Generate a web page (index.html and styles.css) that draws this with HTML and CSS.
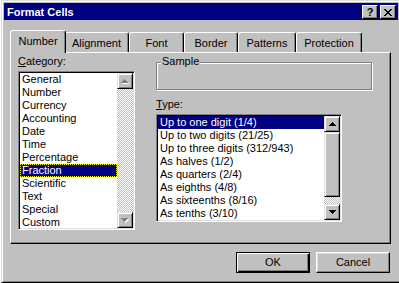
FILE: index.html
```html
<!DOCTYPE html>
<html lang="en">

<head>
    <meta charset="UTF-8">
    <meta name="viewport" content="width=device-width, initial-scale=1.0">
    <title>Format Cells</title>
    <link rel="stylesheet" href="styles.css">
</head>

<body>
    <div class="dialog">
        <div class="titlebar">
            <span class="title">Format Cells</span>
            <div class="caption-btns">
                <span class="cap-btn">?</span>
                <span class="cap-btn">
                    <svg width="8" height="7" viewBox="0 0 8 7" shape-rendering="crispEdges">
                        <path d="M0 0h2v1h-2zM6 0h2v1h-2zM1 1h2v1h-2zM5 1h2v1h-2zM2 2h4v1h-4zM3 3h2v1h-2zM2 4h4v1h-4zM1 5h2v1h-2zM5 5h2v1h-2zM0 6h2v1h-2zM6 6h2v1h-2z" fill="#000"/>
                    </svg>
                </span>
            </div>
        </div>

        <div class="client">
            <div class="tabs">
                <div class="tab is-active" style="width: 56px">Number</div>
                <div class="tab" style="width: 65px">Alignment</div>
                <div class="tab" style="width: 55px">Font</div>
                <div class="tab" style="width: 54px">Border</div>
                <div class="tab" style="width: 58px">Patterns</div>
                <div class="tab" style="width: 66px">Protection</div>
            </div>

            <div class="panel">
                <div class="col-left">
                    <div class="field-label"><u>C</u>ategory:</div>
                    <div class="listbox listbox-category">
                        <ul class="list-items">
                            <li>General</li>
                            <li>Number</li>
                            <li>Currency</li>
                            <li>Accounting</li>
                            <li>Date</li>
                            <li>Time</li>
                            <li>Percentage</li>
                            <li class="is-selected has-focus">Fraction</li>
                            <li>Scientific</li>
                            <li>Text</li>
                            <li>Special</li>
                            <li>Custom</li>
                        </ul>
                        <div class="scrollbar">
                            <div class="sb-btn is-disabled">
                                <svg width="8" height="5" viewBox="0 0 8 5" shape-rendering="crispEdges">
                                    <path d="M4 1h1v1h-1zM3 2h3v1h-3zM2 3h5v1h-5zM1 4h7v1h-7z" fill="#fff"/>
                                    <path d="M3 0h1v1h-1zM2 1h3v1h-3zM1 2h5v1h-5zM0 3h7v1h-7z" fill="#808080"/>
                                </svg>
                            </div>
                            <div class="sb-track"></div>
                            <div class="sb-btn is-disabled">
                                <svg width="8" height="5" viewBox="0 0 8 5" shape-rendering="crispEdges">
                                    <path d="M1 1h7v1h-7zM2 2h5v1h-5zM3 3h3v1h-3zM4 4h1v1h-1z" fill="#fff"/>
                                    <path d="M0 0h7v1h-7zM1 1h5v1h-5zM2 2h3v1h-3zM3 3h1v1h-1z" fill="#808080"/>
                                </svg>
                            </div>
                        </div>
                    </div>
                </div>

                <div class="col-right">
                    <div class="sample">
                        <span class="sample-legend">Sample</span>
                    </div>
                    <div class="field-label field-label-type"><u>T</u>ype:</div>
                    <div class="listbox listbox-type">
                        <ul class="list-items">
                            <li class="is-selected">Up to one digit (1/4)</li>
                            <li>Up to two digits (21/25)</li>
                            <li>Up to three digits (312/943)</li>
                            <li>As halves (1/2)</li>
                            <li>As quarters (2/4)</li>
                            <li>As eighths (4/8)</li>
                            <li>As sixteenths (8/16)</li>
                            <li>As tenths (3/10)</li>
                        </ul>
                        <div class="scrollbar">
                            <div class="sb-btn">
                                <svg width="7" height="4" viewBox="0 0 7 4" shape-rendering="crispEdges">
                                    <path d="M3 0h1v1h-1zM2 1h3v1h-3zM1 2h5v1h-5zM0 3h7v1h-7z" fill="#000"/>
                                </svg>
                            </div>
                            <div class="sb-thumb"></div>
                            <div class="sb-track"></div>
                            <div class="sb-btn">
                                <svg width="7" height="4" viewBox="0 0 7 4" shape-rendering="crispEdges">
                                    <path d="M0 0h7v1h-7zM1 1h5v1h-5zM2 2h3v1h-3zM3 3h1v1h-1z" fill="#000"/>
                                </svg>
                            </div>
                        </div>
                    </div>
                </div>
            </div>

            <div class="actions">
                <button class="btn btn-default">OK</button>
                <button class="btn">Cancel</button>
            </div>
        </div>
    </div>
</body>

</html>
```

FILE: styles.css
```css
html,
body {
    margin: 0;
}

body {
    width: 399px;
    height: 283px;
    overflow: hidden;
    background: #fff;
    color: #000;
    font-family: "Liberation Sans", Arial, sans-serif;
    font-size: 11px;
    line-height: 13px;
}

.dialog {
    box-sizing: border-box;
    width: 400px;
    height: 283px;
    margin-left: 1px;
    padding: 2px;
    background: #c0c0c0;
    border: 1px solid;
    border-color: #dfdfdf #000 #000 #dfdfdf;
    box-shadow: inset 1px 1px #fff, inset -1px -1px #808080;
}

.titlebar {
    height: 17px;
    padding: 0 2px 0 3px;
    display: flex;
    justify-content: space-between;
    align-items: flex-start;
    background: #000080;
    color: #fff;
}

.title {
    font-weight: bold;
    line-height: 18px;
}

.caption-btns {
    display: flex;
    gap: 2px;
    margin-top: 2px;
}

.cap-btn {
    box-sizing: border-box;
    width: 16px;
    height: 14px;
    display: flex;
    align-items: center;
    justify-content: center;
    background: #c0c0c0;
    color: #000;
    font-weight: bold;
    font-size: 11px;
    border: 1px solid;
    border-color: #fff #000 #000 #fff;
    box-shadow: inset -1px -1px #808080;
}

.client {
    padding: 10px 0 0 6px;
}

/* tabs */

.tabs {
    height: 22px;
    padding-left: 2px;
    display: flex;
    align-items: flex-end;
    position: relative;
    z-index: 1;
}

.tab {
    box-sizing: border-box;
    height: 20px;
    padding-top: 4px;
    text-align: center;
    white-space: nowrap;
    background: #c0c0c0;
    border: 1px solid;
    border-bottom: 0;
    border-color: #fff #000 transparent #fff;
    border-radius: 3px 3px 0 0;
    box-shadow: inset -1px 0 #808080;
}

.tab.is-active {
    height: 23px;
    margin: 0 -2px -1px;
    position: relative;
    z-index: 2;
}

.panel {
    box-sizing: border-box;
    width: 381px;
    height: 192px;
    padding: 2px 0 0 7px;
    display: flex;
    gap: 21px;
    border: 1px solid;
    border-color: #fff #000 #000 #fff;
    box-shadow: inset -1px -1px #808080;
}

.field-label {
    height: 13px;
    margin-bottom: 3px;
}

.field-label-type {
    margin-top: 8px;
}

/* list boxes */

.listbox {
    box-sizing: border-box;
    padding: 1px;
    display: flex;
    overflow: hidden;
    background: #fff;
    border: 1px solid;
    border-color: #808080 #fff #fff #808080;
    box-shadow: inset 1px 1px #000, inset -1px -1px #dfdfdf;
}

.listbox-category {
    width: 117px;
    height: 159px;
}

.listbox-type {
    width: 186px;
    height: 108px;
}

.list-items {
    flex: 1;
    margin: 0;
    padding: 0;
    list-style: none;
    overflow: hidden;

    li {
        height: 13px;
        padding-left: 2px;
        white-space: nowrap;
    }
}

.list-items .is-selected {
    background: #000080;
    color: #fff;
}

.list-items .has-focus {
    outline: 1px dotted #ff0;
    outline-offset: -1px;
}

.scrollbar {
    width: 16px;
    display: flex;
    flex-direction: column;
}

.sb-btn,
.sb-thumb {
    box-sizing: border-box;
    background: #c0c0c0;
    border: 1px solid;
    border-color: #dfdfdf #000 #000 #dfdfdf;
    box-shadow: inset 1px 1px #fff, inset -1px -1px #808080;
}

.sb-btn {
    height: 16px;
    display: flex;
    align-items: center;
    justify-content: center;
}

.sb-thumb {
    height: 65px;
}

.sb-track {
    flex: 1;
    background-image: repeating-conic-gradient(#c0c0c0 0 25%, #fff 0 50%);
    background-size: 2px 2px;
}

/* right column */

.col-right {
    width: 216px;
}

.sample {
    box-sizing: border-box;
    height: 28px;
    margin-top: 7px;
    position: relative;
    border: 1px solid #808080;
    box-shadow: inset 1px 1px #fff, 1px 1px #fff;
}

.sample-legend {
    position: absolute;
    top: -8px;
    left: 4px;
    padding: 0 1px;
    background: #c0c0c0;
}

/* buttons */

.actions {
    width: 381px;
    margin-top: 8px;
    padding-right: 1px;
    box-sizing: border-box;
    display: flex;
    justify-content: flex-end;
    gap: 6px;
}

.btn {
    box-sizing: border-box;
    width: 74px;
    height: 21px;
    padding: 0;
    font: inherit;
    color: #000;
    background: #c0c0c0;
    border: 1px solid;
    border-color: #fff #000 #000 #fff;
    box-shadow: inset -1px -1px #808080, inset 1px 1px #dfdfdf;
}

.btn-default {
    border-color: #000;
    box-shadow: inset 1px 1px #fff, inset -1px -1px #000, inset -2px -2px #808080;
}
```
